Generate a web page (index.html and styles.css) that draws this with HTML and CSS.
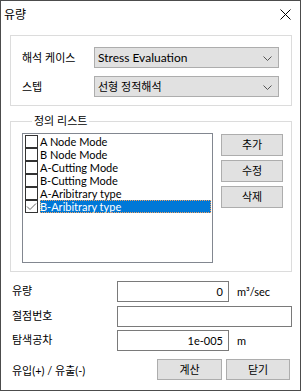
FILE: index.html
```html
<!DOCTYPE html>
<html>
<head>
  <meta charset="utf-8">
  <title>유량</title>
  <link rel="stylesheet" href="styles.css">
</head>
<body>
<div class="dlg">
  <div class="titlebar">
    <span class="title">유량</span>
    <svg class="close" width="11" height="11" viewBox="0 0 11 11">
      <path d="M0.5 0.5 L10.5 10.5 M10.5 0.5 L0.5 10.5" stroke="#000" stroke-width="1" fill="none"/>
    </svg>
  </div>

  <div class="group group-top">
    <div class="field-row">
      <span class="lbl">해석 케이스</span>
      <div class="combo">
        <span class="latin">Stress Evaluation</span>
        <svg width="9" height="5" viewBox="0 0 9 5"><path d="M0.5 0.5 L4.5 4.5 L8.5 0.5" stroke="#555" fill="none"/></svg>
      </div>
    </div>
    <div class="field-row">
      <span class="lbl">스텝</span>
      <div class="combo">
        <span>선형 정적해석</span>
        <svg width="9" height="5" viewBox="0 0 9 5"><path d="M0.5 0.5 L4.5 4.5 L8.5 0.5" stroke="#555" fill="none"/></svg>
      </div>
    </div>
  </div>

  <fieldset class="group group-list">
    <legend>정의 리스트</legend>
    <div class="list-wrap">
      <ul class="listbox">
        <li><span class="chk"></span><span class="txt">A Node Mode</span></li>
        <li><span class="chk"></span><span class="txt">B Node Mode</span></li>
        <li><span class="chk"></span><span class="txt">A-Cutting Mode</span></li>
        <li><span class="chk"></span><span class="txt">B-Cutting Mode</span></li>
        <li><span class="chk"></span><span class="txt">A-Aribitrary type</span></li>
        <li class="sel">
          <span class="chk">
            <svg width="11" height="11" viewBox="0 0 11 11"><path d="M1 5.5 L4 8.5 L10 2.5" stroke="#666" stroke-width="1" fill="none"/></svg>
          </span>
          <span class="txt">B-Aribitrary type</span>
        </li>
      </ul>
      <div class="side-btns">
        <button class="btn">추가</button>
        <button class="btn">수정</button>
        <button class="btn">삭제</button>
      </div>
    </div>
  </fieldset>

  <div class="form">
    <div class="form-row">
      <span class="lbl2">유량</span>
      <div class="input num">0</div>
      <span class="unit">m³/sec</span>
    </div>
    <div class="form-row r2">
      <span class="lbl2">절점번호</span>
      <div class="input wide"></div>
    </div>
    <div class="form-row r3">
      <span class="lbl2">탐색공차</span>
      <div class="input num">1e-005</div>
      <span class="unit">m</span>
    </div>
  </div>

  <div class="footer">
    <span class="note">유입(+) / 유출(-)</span>
    <button class="btn btn-calc">계산</button>
    <button class="btn btn-close">닫기</button>
  </div>
</div>
</body>
</html>
```

FILE: styles.css
```css
html, body {
  margin: 0;
  padding: 0;
  background: #fff;
}

body {
  font-family: "Lato", "Noto Sans CJK KR", sans-serif;
  font-size: 11px;
  color: #000;
}

.dlg {
  width: 301px;
  height: 391px;
  box-sizing: border-box;
  border: 1px solid #4c4c4c;
  background: #fff;
}

.titlebar {
  height: 34px;
  display: flex;
  align-items: flex-start;
  justify-content: space-between;
}

.title {
  font-size: 12px;
  line-height: 14px;
  margin: 7px 0 0 3px;
}

.close {
  margin: 8px 9px 0 0;
}

.group {
  margin: 0 8px 0 9px;
  border: 1px solid #dcdcdc;
}

.group-top {
  padding: 11px 0 0 11px;
  height: 58px;
}

.field-row {
  display: flex;
  align-items: center;
  height: 21px;
  margin-bottom: 8px;
}

.lbl {
  width: 72px;
  line-height: 14px;
}

.combo {
  width: 185px;
  height: 21px;
  box-sizing: border-box;
  border: 1px solid #adadad;
  background: #e1e1e1;
  display: flex;
  align-items: center;
  justify-content: space-between;
  padding: 0 6px 0 3px;
  line-height: 14px;
}

.combo .latin {
  font-size: 12px;
}

.combo svg {
  margin-top: 1px;
}

fieldset.group-list {
  margin-top: 9px;
  padding: 0 0 8px 11px;
  min-width: 0;
}

legend {
  padding: 0 2px;
  margin-left: 10px;
  line-height: 12px;
}

.list-wrap {
  display: flex;
  align-items: flex-start;
  margin-top: 6px;
}

.listbox {
  list-style: none;
  margin: 0;
  padding: 1px 0 0 2px;
  width: 191px;
  height: 130px;
  box-sizing: border-box;
  border: 1px solid #828790;
  background: #fff;
}

.listbox li {
  display: flex;
  align-items: center;
  height: 13px;
  line-height: 13px;
}

.chk {
  width: 13px;
  height: 13px;
  box-sizing: border-box;
  border: 1px solid #333;
  background: #fff;
  display: flex;
  align-items: center;
  justify-content: center;
  flex: none;
}

.txt {
  margin-left: 2px;
  flex: 1;
  height: 13px;
}

.sel .txt {
  background: #0078d7;
  color: #fff;
  outline: 1px dotted #f0a060;
  outline-offset: -1px;
  margin-right: 1px;
}

.side-btns {
  display: flex;
  flex-direction: column;
  gap: 4px;
  margin-left: 8px;
  margin-top: 1px;
}

.btn {
  font-family: inherit;
  font-size: 11px;
  line-height: 14px;
  color: #000;
  background: #e1e1e1;
  border: 1px solid #adadad;
  padding: 0;
  height: 22px;
  width: 62px;
  box-sizing: border-box;
}

.form {
  margin-top: 9px;
  padding-left: 11px;
}

.form-row {
  display: flex;
  align-items: center;
  height: 21px;
}

.form-row.r2 {
  margin-top: 4px;
}

.form-row.r3 {
  margin-top: 3px;
}

.lbl2 {
  width: 105px;
  line-height: 14px;
  margin-bottom: 2px;
}

.input {
  height: 21px;
  width: 112px;
  box-sizing: border-box;
  border: 1px solid #7a7a7a;
  background: #fff;
  line-height: 19px;
  padding: 0 5px;
}

.input.num {
  text-align: right;
}

.input.wide {
  width: 175px;
}

.unit {
  margin-left: 8px;
  line-height: 14px;
}

.footer {
  display: flex;
  align-items: center;
  margin-top: 8px;
  padding-left: 11px;
}

.note {
  width: 145px;
  line-height: 14px;
  margin-top: 2px;
}

.btn-calc {
  width: 65px;
  height: 21px;
}

.btn-close {
  width: 64px;
  height: 21px;
  margin-left: 4px;
}
```
